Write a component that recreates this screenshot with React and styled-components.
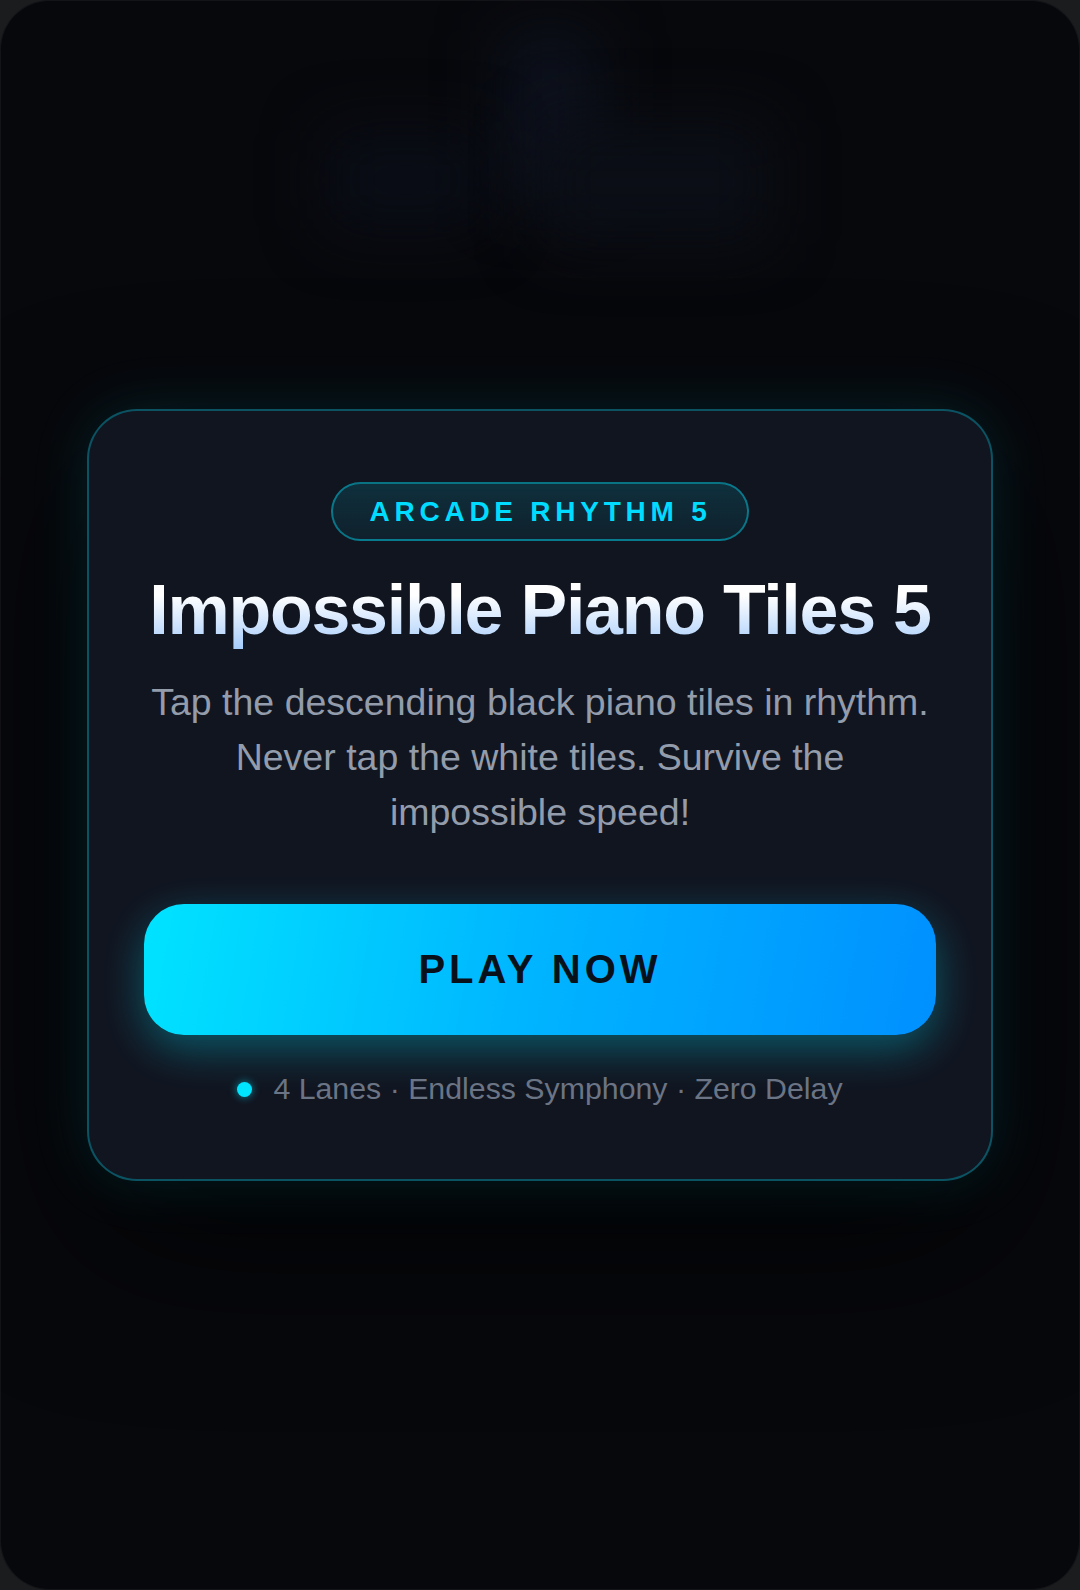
import React from "react";
import styled, { createGlobalStyle } from "styled-components";

const GlobalStyle = createGlobalStyle`
    html, body {
        margin: 0;
        padding: 0;
        background: #1b1c1e;
    }
    * {
        box-sizing: border-box;
    }
`

const Screen = styled.div`
    position: relative;
    width: 1080px;
    height: 1590px;
    border-radius: 50px;
    background: #07080c;
    box-shadow: inset 0 0 0 1px rgba(255, 255, 255, 0.05);
    overflow: hidden;
    display: flex;
    align-items: center;
    justify-content: center;
    font-family: "Liberation Sans", Arial, sans-serif;
`

const GhostTile = styled.div`
    position: absolute;
    left: ${(p) => p.$x}px;
    top: ${(p) => p.$y}px;
    width: ${(p) => p.$w}px;
    height: ${(p) => p.$h}px;
    background: ${(p) => p.$color};
    border-radius: 14px;
    filter: blur(30px);
`

const Card = styled.div`
    position: relative;
    width: 906px;
    padding: 71px 55px 67px;
    border: 2px solid rgba(0, 210, 235, 0.33);
    border-radius: 50px;
    background: #111520;
    box-shadow: 0 0 60px rgba(0, 229, 255, 0.12), 0 60px 160px rgba(0, 0, 0, 0.75);
    display: flex;
    flex-direction: column;
    align-items: center;
    text-align: center;
`

const Badge = styled.div`
    padding: 11px 35px 11px 36px;
    border: 2px solid rgba(0, 229, 255, 0.42);
    border-radius: 999px;
    background: linear-gradient(180deg, rgba(0, 229, 255, 0.13), rgba(0, 229, 255, 0.06));
    color: #00dcff;
    font-size: 28px;
    line-height: 33px;
    font-weight: 700;
    letter-spacing: 0.17em;
`

const Title = styled.h1`
    margin: 31px 0 0;
    font-size: 70px;
    line-height: 1.1;
    font-weight: 700;
    letter-spacing: -0.018em;
    background: linear-gradient(180deg, #ffffff 30%, #a6ccfb 100%);
    -webkit-background-clip: text;
    background-clip: text;
    color: transparent;
`

const Description = styled.p`
    margin: 26px 0 0;
    max-width: 786px;
    font-size: 37.5px;
    line-height: 55px;
    color: #939cab;
`

const PlayButton = styled.button`
    margin-top: 64px;
    width: 100%;
    height: 131px;
    border: none;
    border-radius: 40px;
    background: linear-gradient(100deg, #00e3ff 0%, #00b4ff 50%, #0090ff 100%);
    box-shadow: 0 14px 44px rgba(0, 229, 255, 0.33);
    color: #081019;
    font-family: inherit;
    font-size: 40px;
    font-weight: 700;
    letter-spacing: 0.1em;
    display: flex;
    align-items: center;
    justify-content: center;
    cursor: pointer;
`

const MetaRow = styled.div`
    margin-top: 31px;
    display: flex;
    align-items: center;
    gap: 21px;
    font-size: 30.3px;
    line-height: 1.5;
    color: #6b7484;
`

const Dot = styled.span`
    width: 15px;
    height: 15px;
    border-radius: 50%;
    background: #00e5ff;
    box-shadow: 0 0 8px rgba(0, 229, 255, 0.6);
`

const tiles = [
    { x: 500, y: 30, w: 100, h: 170, color: "#0d111c" },
    { x: 325, y: 130, w: 160, h: 100, color: "#0a0d16" },
    { x: 540, y: 120, w: 230, h: 125, color: "#0b0e16" },
];

const App = () => {
    return (
        <>
            <GlobalStyle />
            <Screen>
                {tiles.map((t, i) => (
                    <GhostTile key={i} $x={t.x} $y={t.y} $w={t.w} $h={t.h} $color={t.color} />
                ))}
                <Card>
                    <Badge>ARCADE RHYTHM 5</Badge>
                    <Title>Impossible Piano Tiles 5</Title>
                    <Description>
                        Tap the descending black piano tiles in rhythm. Never tap the white tiles. Survive the impossible speed!
                    </Description>
                    <PlayButton>PLAY NOW</PlayButton>
                    <MetaRow>
                        <Dot />
                        <span>4 Lanes · Endless Symphony · Zero Delay</span>
                    </MetaRow>
                </Card>
            </Screen>
        </>
    );
};

export default App;
